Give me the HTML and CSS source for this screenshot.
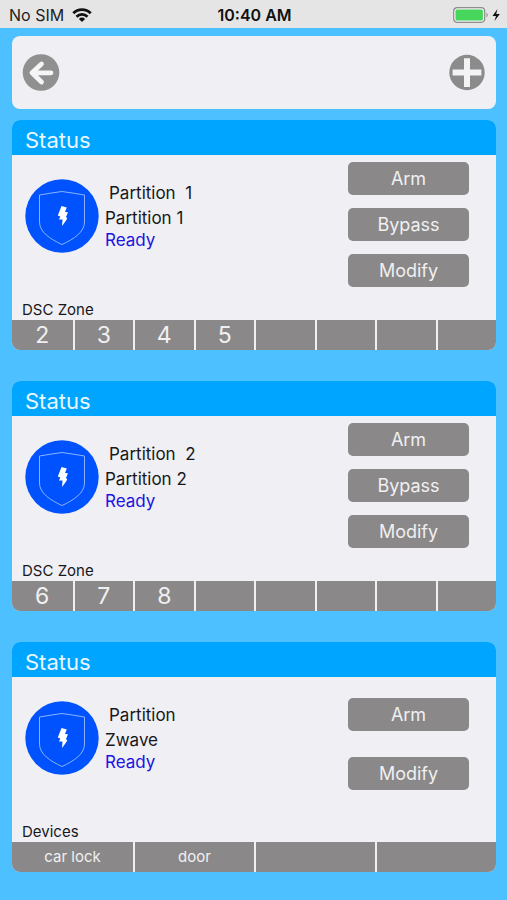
FILE: index.html
```html
<!DOCTYPE html>
<html lang="en">
<head>
<meta charset="utf-8">
<meta name="viewport" content="width=device-width, initial-scale=1">
<title>Partitions</title>
<link rel="stylesheet" href="styles.css">
</head>
<body>
<svg class="sprite" aria-hidden="true">
  <symbol id="shield" viewBox="0 0 74 74">
    <circle cx="37" cy="37" r="36.7" fill="#0052ff"/>
    <path d="M37 12.5Q26 14 14.500 16V43C14.500 53 25 60 37 65.500C49 60 59.500 53 59.500 43V16Q48 14 37 12.500Z" fill="none" stroke="#8ab4ff" stroke-width="1"/>
    <path d="M36.500 27L41.800 28.500L40 33L43 33.300L41 38L42.300 39.500L40 43L37 47L37.500 40.500L34 40.500L35.300 37.500L32.800 36.500Z" fill="#fff"/>
  </symbol>
</svg>

<div class="statusbar">
  <div class="carrier">
    <span>No SIM</span>
    <svg class="wifi" viewBox="0 0 20 14" aria-hidden="true">
      <g fill="none" stroke="#111" stroke-width="2.800">
        <path d="M1.300 5.200A12.300 12.300 0 0 1 18.700 5.200"/>
        <path d="M4.500 8.700A7.800 7.800 0 0 1 15.500 8.700"/>
      </g>
      <path d="M10 14L6.900 10.900A4.400 4.400 0 0 1 13.100 10.900Z" fill="#111"/>
    </svg>
  </div>
  <time class="clock">10:40 AM</time>
  <div class="power">
    <svg class="battery" viewBox="0 0 47 16" aria-hidden="true">
      <rect x=".7" y=".7" width="31" height="14.600" rx="3.500" fill="#f2f2f2" stroke="#8d8d8d" stroke-width="1.200"/>
      <rect x="2.500" y="2.500" width="27.400" height="11" rx="1.500" fill="#46d65c"/>
      <path d="M33.500 5.500Q36 8 33.500 10.500Z" fill="#8d8d8d"/>
      <path d="M44.500 2L39.500 9H43L41.500 14L46.800 7H43.200Z" fill="#111"/>
    </svg>
  </div>
</div>

<main class="screen">
  <nav class="toolbar">
    <button class="round" aria-label="Back">
      <svg viewBox="0 0 38 38" aria-hidden="true">
        <circle cx="19" cy="18.500" r="18.300" fill="#909090"/>
        <path d="M19.500 10L10 18.800L19.500 28M10.500 18.800H29" fill="none" stroke="#f5f5f7" stroke-width="4.800" stroke-linecap="round" stroke-linejoin="round"/>
      </svg>
    </button>
    <button class="round" aria-label="Add">
      <svg viewBox="0 0 38 38" aria-hidden="true">
        <circle cx="19" cy="18.500" r="17.700" fill="#8b8b8b"/>
        <path d="M19 4.200V33M4.600 18.500H33.400" fill="none" stroke="#f3f2f5" stroke-width="6"/>
      </svg>
    </button>
  </nav>

  <section class="card">
    <h2 class="title">Status</h2>
    <div class="body">
      <svg class="badge" aria-hidden="true"><use href="#shield"/></svg>
      <div class="info">
        <p class="name">Partition &nbsp;1</p>
        <p>Partition 1</p>
        <p class="state">Ready</p>
      </div>
      <div class="actions">
        <button>Arm</button>
        <button>Bypass</button>
        <button>Modify</button>
      </div>
      <h3 class="label">DSC Zone</h3>
    </div>
    <ul class="cells zones">
      <li>2</li><li>3</li><li>4</li><li>5</li><li></li><li></li><li></li><li></li>
    </ul>
  </section>

  <section class="card">
    <h2 class="title">Status</h2>
    <div class="body">
      <svg class="badge" aria-hidden="true"><use href="#shield"/></svg>
      <div class="info">
        <p class="name">Partition &nbsp;2</p>
        <p>Partition 2</p>
        <p class="state">Ready</p>
      </div>
      <div class="actions">
        <button>Arm</button>
        <button>Bypass</button>
        <button>Modify</button>
      </div>
      <h3 class="label">DSC Zone</h3>
    </div>
    <ul class="cells zones">
      <li>6</li><li>7</li><li>8</li><li></li><li></li><li></li><li></li><li></li>
    </ul>
  </section>

  <section class="card">
    <h2 class="title">Status</h2>
    <div class="body">
      <svg class="badge" aria-hidden="true"><use href="#shield"/></svg>
      <div class="info">
        <p class="name">Partition</p>
        <p>Zwave</p>
        <p class="state">Ready</p>
      </div>
      <div class="actions pair">
        <button>Arm</button>
        <button>Modify</button>
      </div>
      <h3 class="label">Devices</h3>
    </div>
    <ul class="cells devices">
      <li>car lock</li><li>door</li><li></li><li></li>
    </ul>
  </section>
</main>
</body>
</html>
```

FILE: styles.css
```css
* {
  box-sizing: border-box;
  margin: 0;
  padding: 0;
}

body {
  min-height: 100vh;
  background: #4dc1ff;
  color: #18181a;
  font-family: Inter, "Liberation Sans", sans-serif;
  font-size: 16px;
}

button {
  border: 0;
  font: inherit;
  cursor: pointer;
}

.sprite {
  display: none;
}

.statusbar {
  display: grid;
  grid-template-columns: 1fr auto 1fr;
  align-items: center;
  height: 28px;
  padding: 2px 7px 0 9px;
  background: #e5e5e5;
  color: #222;
}

.carrier {
  display: flex;
  align-items: center;
  gap: 8px;
}

.wifi {
  width: 20px;
  height: 14px;
}

.clock {
  color: #111;
  font-weight: 600;
}

.power {
  display: flex;
  justify-content: flex-end;
}

.battery {
  width: 47px;
  height: 16px;
}

.screen {
  display: flex;
  flex-direction: column;
  padding: 8px 11px 27px 12px;
}

.toolbar {
  display: flex;
  justify-content: space-between;
  align-items: center;
  height: 73px;
  margin-bottom: 11px;
  padding: 0 10px;
  border-radius: 8px;
  background: #efeff4;
}

.round {
  width: 38px;
  height: 38px;
  border-radius: 50%;
  background: none;
}

.round svg {
  display: block;
}

.card {
  overflow: hidden;
  border-radius: 8px;
  background: #efeff4;
}

.card + .card {
  margin-top: 31px;
}

.title {
  padding: 6px 13px 1px;
  background: #00a5ff;
  color: #e8f7ff;
  font-size: 22px;
  font-weight: 400;
  line-height: 28px;
}

.body {
  display: grid;
  grid-template-columns: 74px 1fr 121px;
  grid-template-rows: 1fr auto;
  align-items: start;
  column-gap: 6px;
  min-height: 165px;
  padding: 0 27px 0 13px;
}

.badge {
  width: 74px;
  height: 74px;
  margin-top: 24px;
}

.info {
  padding-top: 27px;
  font-size: 17px;
  line-height: 22px;
}

.info .name {
  margin-bottom: 3px;
  padding-left: 4px;
}

.info .state {
  color: #2012e0;
}

.actions {
  display: flex;
  flex-direction: column;
  gap: 13px;
  padding-top: 7px;
}

.actions.pair {
  gap: 26px;
  padding-top: 21px;
}

.actions button {
  height: 33px;
  border-radius: 5px;
  background: #8a8888;
  color: #f0f0f2;
  font-size: 18px;
}

.label {
  grid-column: 1 / -1;
  margin-left: -3px;
  font-size: 15px;
  font-weight: 400;
  line-height: 20px;
}

.cells {
  display: grid;
  grid-auto-columns: 1fr;
  grid-auto-flow: column;
  height: 30px;
  background: #8a8888;
  color: #f0f0f2;
  list-style: none;
  text-align: center;
  line-height: 30px;
}

.cells li + li {
  border-left: 2px solid #efeff4;
}

.zones {
  font-size: 23px;
}

.devices {
  font-size: 15px;
}
```
